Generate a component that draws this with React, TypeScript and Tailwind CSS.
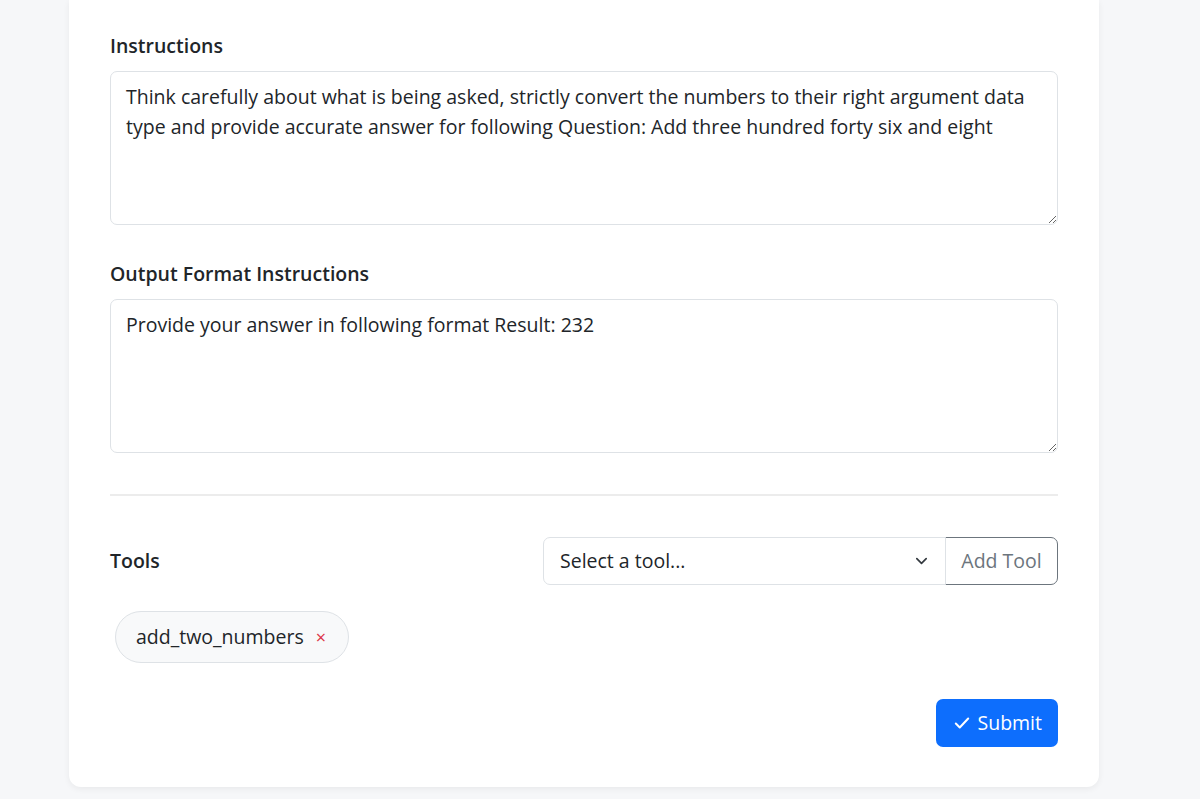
import React, { useState } from 'react';

const font = { fontFamily: '"Open Sans", "Noto Sans", sans-serif' };

const FieldLabel: React.FC<{ children: React.ReactNode }> = ({ children }) => (
  <label className="block text-[19.5px] font-[560] leading-[30px] text-[#212529] mb-[10px]">{children}</label>
);

export default function App() {
  const [instructions, setInstructions] = useState(
    'Think carefully about what is being asked, strictly convert the numbers to their right argument data type and provide accurate answer for following Question: Add three hundred forty six and eight'
  );
  const [format, setFormat] = useState('Provide your answer in following format Result: 232');
  const [tools, setTools] = useState<string[]>(['add_two_numbers']);

  return (
    <div className="min-h-screen bg-[#f6f7f9]" style={font}>
      <div className="ml-[69px] w-[1030px] pb-[12px]">
        <div className="bg-white rounded-b-[12px] shadow-[0_2px_6px_rgba(0,0,0,0.06)] px-[41px] pt-[31px] pb-[40px] text-[#212529]">
          <FieldLabel>Instructions</FieldLabel>
          <textarea
            value={instructions}
            onChange={(e) => setInstructions(e.target.value)}
            className="block w-full h-[154px] border border-[#dee2e6] rounded-[7px] px-[15px] py-[10px] text-[19.5px] leading-[30px] text-[#212529] outline-none"
          />

          <div className="mt-[34px]">
            <FieldLabel>Output Format Instructions</FieldLabel>
            <textarea
              value={format}
              onChange={(e) => setFormat(e.target.value)}
              className="block w-full h-[154px] border border-[#dee2e6] rounded-[7px] px-[15px] py-[10px] text-[19.5px] leading-[30px] text-[#212529] outline-none"
            />
          </div>

          <hr className="mt-[41px] mb-0 border-t-2 border-[#ececec]" />

          <div className="flex items-center justify-between mt-[41px]">
            <span className="text-[19.5px] font-[560]">Tools</span>
            <div className="flex w-[515px]">
              <div className="relative flex-1">
                <select className="appearance-none w-full h-[48px] border border-[#dee2e6] rounded-l-[7px] pl-[16px] pr-10 text-[19.5px] text-[#212529] bg-white outline-none">
                  <option>Select a tool...</option>
                  <option>add_two_numbers</option>
                </select>
                <svg className="absolute right-[17px] top-1/2 -translate-y-1/2 pointer-events-none" width="15" height="15" viewBox="0 0 16 16" fill="none">
                  <path d="M3 5.5l5 5 5-5" stroke="#343a40" strokeWidth="1.8" strokeLinecap="round" strokeLinejoin="round" />
                </svg>
              </div>
              <button className="h-[48px] w-[113px] border border-[#6c757d] rounded-r-[7px] text-[19.5px] text-[#6c757d] bg-white -ml-px">
                Add Tool
              </button>
            </div>
          </div>

          <div className="flex flex-wrap gap-2 mt-[26px] pl-[5px]">
            {tools.map((t) => (
              <span key={t} className="inline-flex items-center h-[52px] pl-[20px] pr-[22px] rounded-full bg-[#f8f9fa] border border-[#dee2e6] text-[19.5px]">
                {t}
                <button onClick={() => setTools(tools.filter((x) => x !== t))} className="ml-[12px] text-[#dc3545] text-[18px] leading-none">
                  ×
                </button>
              </span>
            ))}
          </div>

          <div className="flex justify-end mt-[36px]">
            <button className="flex items-center gap-[6px] h-[48px] pl-[17px] pr-[16px] rounded-[7px] bg-[#0d6efd] text-white text-[19.5px]">
              <svg width="18" height="18" viewBox="0 0 16 16" fill="none">
                <path d="M2.5 8.5l3.5 3.5 7.5-8" stroke="white" strokeWidth="1.8" strokeLinecap="round" strokeLinejoin="round" />
              </svg>
              Submit
            </button>
          </div>
        </div>
      </div>
    </div>
  );
}
